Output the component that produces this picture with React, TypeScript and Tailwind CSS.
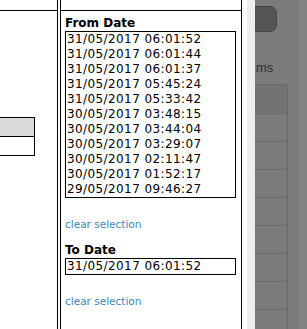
import React from "react";

const fromDates = [
  "31/05/2017 06:01:52",
  "31/05/2017 06:01:44",
  "31/05/2017 06:01:37",
  "31/05/2017 05:45:24",
  "31/05/2017 05:33:42",
  "30/05/2017 03:48:15",
  "30/05/2017 03:44:04",
  "30/05/2017 03:29:07",
  "30/05/2017 02:11:47",
  "30/05/2017 01:52:17",
  "29/05/2017 09:46:27",
];

export default function App() {
  return (
    <div
      className="w-[307px] h-[329px] bg-white flex overflow-hidden text-black"
      style={{ fontFamily: '"DejaVu Sans", Verdana, sans-serif' }}
    >
      {/* left frame */}
      <div className="w-[57px] shrink-0 flex flex-col">
        <div className="mt-[10px] border-t border-black" />
        <div className="mt-[106px] w-[35px] border-t border-r border-b border-black">
          <div className="h-[19px] bg-[#d9d9d9] border-b border-black" />
          <div className="h-[18px]" />
        </div>
      </div>

      {/* frame divider */}
      <div className="w-[1px] shrink-0 bg-black" />
      <div className="w-[2px] shrink-0" />
      <div className="w-[1px] shrink-0 bg-black" />

      {/* right frame */}
      <div className="w-[181px] shrink-0 border-r border-black">
        <div className="mt-[10px] border-t border-black pt-[4px] pl-[4px] flex flex-col items-start">
          <div className="text-[12px] leading-[16px] font-bold">From Date</div>
          <div className="w-[171px] h-[167px] border border-black pl-[1px] overflow-hidden">
            {fromDates.map((d) => (
              <div key={d} className="text-[12px] leading-[15px] tracking-[0.4px] whitespace-nowrap">
                {d}
              </div>
            ))}
          </div>
          <div className="mt-[20px] text-[10.5px] leading-[13px] text-[#3a88b5]">
            clear selection
          </div>
          <div className="mt-[11px] text-[12px] leading-[16px] font-bold">To Date</div>
          <div className="w-[171px] h-[17px] border border-black pl-[1px]">
            <div className="text-[12px] leading-[15px] tracking-[0.4px] whitespace-nowrap">
              31/05/2017 06:01:52
            </div>
          </div>
          <div className="mt-[20px] text-[10.5px] leading-[13px] text-[#3a88b5]">
            clear selection
          </div>
        </div>
      </div>

      {/* gap and light strip */}
      <div className="w-[5px] shrink-0" />
      <div className="w-[8px] shrink-0 bg-[#eeeeee]" />

      {/* dimmed page behind */}
      <div className="flex-1 flex overflow-hidden">
        <div className="w-[43px] shrink-0 bg-[#7b7b7b] flex flex-col overflow-hidden">
          <div className="mt-[6px] ml-[-30px] w-[52px] h-[26px] shrink-0 rounded-[7px] bg-[#555555] border border-[#474747]" />
          <div
            className="mt-[28px] pl-[1px] text-[13px] leading-[15px] text-[#2e2e36]"
            style={{ fontFamily: '"Liberation Sans", Arial, sans-serif' }}
          >
            ms
          </div>
          <div className="mt-[9px] ml-[-20px] w-[53px] border-t border-r border-[#6a6a6a] shrink-0">
            <div className="h-[29px] bg-[#727272] border-b border-[#696969]" />
            {[0, 1, 2, 3, 4, 5, 6, 7].map((i) => (
              <div key={i} className="h-[28px] bg-[#7b7b7b] border-b border-[#6b6b6b]" />
            ))}
          </div>
        </div>
        <div className="flex-1 bg-[#828282]" />
      </div>
    </div>
  );
}
